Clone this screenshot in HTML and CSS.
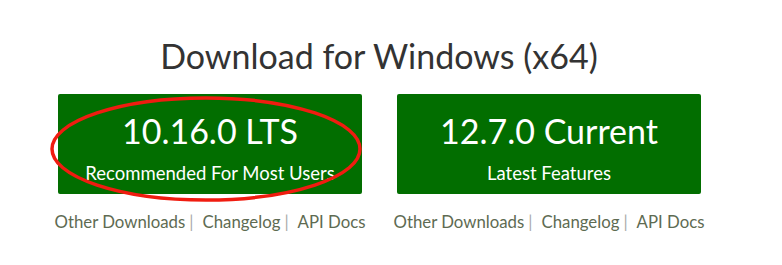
FILE: index.html
```html
<!DOCTYPE html>
<html lang="en">
<head>
  <meta charset="UTF-8" />
  <meta name="viewport" content="width=device-width, initial-scale=1.0"/>
  <title>Download for Windows</title>
  <link rel="stylesheet" href="styles.css">
</head>
<body>
  <section class="download">
    <h2>Download for Windows (x64)</h2>

    <div class="options">
      <div class="option">
        <a class="dl-button" href="#lts">
          <span class="version">10.16.0 LTS</span>
          <span class="tagline">Recommended For Most Users</span>
        </a>
        <svg class="highlight" width="318" height="112" viewBox="0 0 318 112">
          <ellipse cx="157" cy="55" rx="154" ry="51" fill="none" stroke="#f01c10" stroke-width="3.5"/>
        </svg>
        <div class="links">
          <a href="#">Other Downloads</a><span class="sep">|</span>
          <a href="#">Changelog</a><span class="sep">|</span>
          <a href="#">API Docs</a>
        </div>
      </div>

      <div class="option">
        <a class="dl-button" href="#current">
          <span class="version">12.7.0 Current</span>
          <span class="tagline">Latest Features</span>
        </a>
        <div class="links">
          <a href="#">Other Downloads</a><span class="sep">|</span>
          <a href="#">Changelog</a><span class="sep">|</span>
          <a href="#">API Docs</a>
        </div>
      </div>
    </div>
  </section>
</body>
</html>
```

FILE: styles.css
```css
body {
  margin: 0;
  padding: 0;
  background: #fff;
  font-family: 'Lato', 'Open Sans', sans-serif;
}

.download {
  width: 642px;
  margin-left: 58px;
  padding-top: 34px;
  text-align: center;
}

h2 {
  margin: 0;
  font-size: 34px;
  font-weight: 400;
  line-height: 44px;
  color: #333;
}

.options {
  display: flex;
  gap: 35px;
  margin-top: 16px;
}

.option {
  position: relative;
  width: 304px;
}

.dl-button {
  display: flex;
  flex-direction: column;
  align-items: center;
  height: 100px;
  box-sizing: border-box;
  padding-top: 17px;
  background-color: #026e00;
  border-radius: 2px;
  color: #fff;
  text-decoration: none;
}

.version {
  font-size: 34px;
  line-height: 40px;
}

.tagline {
  margin-top: 11px;
  font-size: 18.5px;
  line-height: 22px;
}

.highlight {
  position: absolute;
  left: -9px;
  top: 0;
}

.links {
  display: flex;
  justify-content: center;
  align-items: baseline;
  margin-top: 17px;
  font-size: 16.8px;
  line-height: 22px;
  white-space: nowrap;
}

.links a {
  color: #5e6b52;
  text-decoration: none;
}

.sep {
  color: #aaa;
  margin: 0 9px 0 4px;
}
```
